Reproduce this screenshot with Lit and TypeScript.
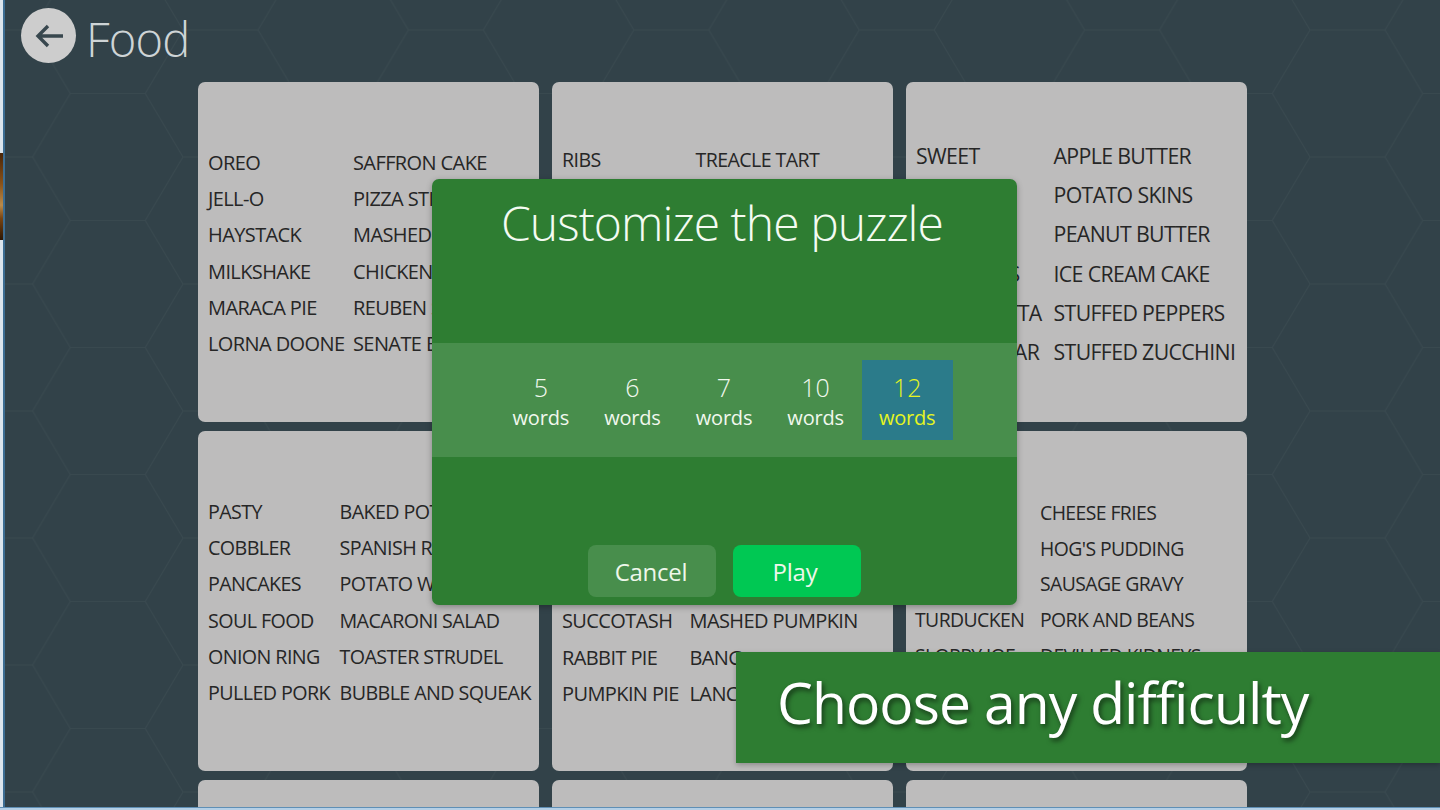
import { LitElement, html, css } from "lit";
import { customElement } from "lit/decorators.js";

interface Card {
  size: number;
  rowGap: number;
  top: number;
  left: number;
  col1: number;
  rows: [string, string][];
}

const CARDS: Card[] = [
  { size: 20, rowGap: 36.2, top: 63, left: 10, col1: 145, rows: [["OREO", "SAFFRON CAKE"], ["JELL-O", "PIZZA STICKS"], ["HAYSTACK", "MASHED PEAS"], ["MILKSHAKE", "CHICKEN PIE"], ["MARACA PIE", "REUBEN SANDWICH"], ["LORNA DOONE", "SENATE BEAN SOUP"]] },
  { size: 19.6, rowGap: 36.2, top: 60, left: 10, col1: 133.5, rows: [["RIBS", "TREACLE TART"]] },
  { size: 21.3, rowGap: 39.4, top: 53.5, left: 10, col1: 137.5, rows: [["SWEET", "APPLE BUTTER"], ["", "POTATO SKINS"], ["", "PEANUT BUTTER"], ["BROWNIES", "ICE CREAM CAKE"], ["BRUSCHETTA", "STUFFED PEPPERS"], ["CANE SUGAR", "STUFFED ZUCCHINI"]] },
  { size: 19.7, rowGap: 36.4, top: 62.5, left: 10, col1: 131.5, rows: [["PASTY", "BAKED POTATO"], ["COBBLER", "SPANISH RICE"], ["PANCAKES", "POTATO WEDGES"], ["SOUL FOOD", "MACARONI SALAD"], ["ONION RING", "TOASTER STRUDEL"], ["PULLED PORK", "BUBBLE AND SQUEAK"]] },
  { size: 20, rowGap: 36.4, top: 63, left: 10, col1: 127.5, rows: [["", ""], ["", ""], ["", ""], ["SUCCOTASH", "MASHED PUMPKIN"], ["RABBIT PIE", "BANG"], ["PUMPKIN PIE", "LANC"]] },
  { size: 19.4, rowGap: 35.7, top: 64, left: 9, col1: 125, rows: [["", "CHEESE FRIES"], ["", "HOG'S PUDDING"], ["", "SAUSAGE GRAVY"], ["TURDUCKEN", "PORK AND BEANS"], ["SLOPPY JOE", "DEVILLED KIDNEYS"]] },
];

@customElement("app-root")
export class AppRoot extends LitElement {
  static styles = css`
    :host {
      display: block;
      width: 1440px;
      height: 810px;
      overflow: hidden;
      font-family: "Open Sans", "Noto Sans", sans-serif;
    }
    .page {
      position: relative;
      width: 1440px;
      height: 810px;
      overflow: hidden;
      background: #324249;
      box-sizing: border-box;
    }
    .hex { position: absolute; inset: 0; width: 100%; height: 100%; }
    .shell { position: relative; height: 810px; }
    .header {
      display: flex;
      align-items: center;
      height: 72px;
      padding-left: 21px;
      gap: 10px;
    }
    .back {
      width: 55px;
      height: 55px;
      border-radius: 50%;
      background: #cdcdcd;
      display: flex;
      align-items: center;
      justify-content: center;
      margin-top: -1px;
    }
    .title {
      font-family: "Open Sans", sans-serif;
      font-weight: 300;
      font-size: 47px;
      line-height: 60px;
      color: #ced4d6;
      margin-top: 5px;
      letter-spacing: -0.8px;
    }
    .grid {
      display: grid;
      grid-template-columns: repeat(3, 341px);
      grid-auto-rows: 340px;
      column-gap: 13px;
      row-gap: 9px;
      padding: 10px 0 0 198px;
    }
    .card {
      background: #bdbcbc;
      border-radius: 7px;
      box-sizing: border-box;
      overflow: hidden;
    }
    .words { display: grid; color: #262626; white-space: nowrap; letter-spacing: -0.03em; }
    .dialog {
      position: absolute;
      left: 432px;
      top: 179px;
      width: 585px;
      height: 426px;
      background: #2e7d32;
      border-radius: 7px;
      box-shadow: 0 2px 6px rgba(0, 0, 0, 0.3);
      display: flex;
      flex-direction: column;
      color: #fff;
    }
    .dialog h1 {
      margin: 0;
      font-weight: 300;
      font-size: 48px;
      line-height: 60px;
      height: 164px;
      padding: 14px 5px 0 0;
      box-sizing: border-box;
      text-align: center;
      letter-spacing: -0.93px;
      color: #f4fbf2;
    }
    .band {
      height: 114px;
      background: #488e4c;
      display: flex;
      justify-content: center;
      align-items: center;
    }
    .opts { display: flex; }
    .opt {
      width: 91.6px;
      height: 80px;
      display: flex;
      flex-direction: column;
      align-items: center;
      justify-content: center;
      color: #f1f8ee;
      text-align: center;
      padding: 2px 1px 0 0;
      box-sizing: border-box;
    }
    .opt .n { font-size: 25px; line-height: 32px; font-weight: 300; }
    .opt .w { font-size: 20px; line-height: 29px; letter-spacing: -0.2px; }
    .opt.sel { background: #2b7b8a; color: #e6f521; }
    .actions {
      margin-top: auto;
      display: flex;
      justify-content: center;
      gap: 17px;
      padding: 0 0 8px 0;
    }
    .btn {
      width: 128px;
      height: 52px;
      border-radius: 8px;
      display: flex;
      align-items: center;
      justify-content: center;
      font-size: 24px;
      font-weight: 400;
      letter-spacing: -0.25px;
      color: #eef7ea;
      box-sizing: border-box;
      padding-right: 2px;
    }
    .cancel { background: #488e4c; }
    .play { background: #00c853; padding-right: 4px; }
    .banner {
      position: absolute;
      left: 736px;
      top: 652px;
      width: 704px;
      height: 111px;
      background: #2e7d32;
      box-sizing: border-box;
      padding: 0 0 12px 41px;
      display: flex;
      align-items: center;
      box-shadow: 0 2px 5px rgba(0, 0, 0, 0.25);
      color: #fff;
      font-size: 57px;
      letter-spacing: -0.93px;
      text-shadow: 2px 3px 5px rgba(0, 0, 0, 0.55);
    }
    .edge-left { position: absolute; left: 0; top: 0; bottom: 0; width: 3px; background: #dde5ec; border-right: 2px solid #3d6d92; }
    .edge-img {
      position: absolute;
      left: 0;
      top: 153px;
      width: 3px;
      height: 87px;
      background: linear-gradient(#4a2508, #8a5218 35%, #b98a4a 60%, #7a4512 75%, #2c1604);
    }
    .edge-bottom { position: absolute; left: 0; right: 0; bottom: 0; height: 3px; background: #b4cfe6; border-top: 1px solid #5f8fb5; box-sizing: border-box; }
  `;

  render() {
    return html`
      <div class="page">
        <svg class="hex" aria-hidden="true">
          <defs>
            <pattern id="h" width="225.4" height="127" patternUnits="userSpaceOnUse" patternTransform="translate(183 30)">
              <path d="M0 0H75L112.7 63.5L75 127H0M112.7 63.5H187.7L225.4 0M187.7 63.5L225.4 127" fill="none" stroke="#39494f" stroke-width="1"/>
            </pattern>
          </defs>
          <rect width="1440" height="810" fill="url(#h)"/>
        </svg>
        <div class="shell">
          <div class="header">
            <div class="back">
              <svg width="28" height="24" viewBox="0 0 28 24" fill="none" stroke="#38474e" stroke-width="3.4">
                <path d="M28 12H3M13 2L3 12L13 22"/>
              </svg>
            </div>
            <div class="title">Food</div>
          </div>
          <div class="grid">
            ${CARDS.map((c) => this.renderCard(c))}
            <div class="card"></div><div class="card"></div><div class="card"></div>
          </div>
        </div>
        <div class="dialog">
          <h1>Customize the puzzle</h1>
          <div class="band">
            <div class="opts">
              ${[5, 6, 7, 10, 12].map(
                (n) => html`<div class="opt ${n === 12 ? "sel" : ""}"><div class="n">${n}</div><div class="w">words</div></div>`
              )}
            </div>
          </div>
          <div class="actions">
            <div class="btn cancel">Cancel</div>
            <div class="btn play">Play</div>
          </div>
        </div>
        <div class="banner">Choose any difficulty</div>
        <div class="edge-left"></div>
        <div class="edge-img"></div>
        <div class="edge-bottom"></div>
      </div>
    `;
  }

  renderCard(c: Card) {
    return html`<div class="card" style="padding:${c.top}px 0 0 ${c.left}px">
      <div class="words" style="font-size:${c.size}px;grid-template-columns:${c.col1}px auto;grid-auto-rows:${c.rowGap}px;line-height:${c.rowGap}px">
        ${c.rows.map((r) => html`<span>${r[0]}</span><span>${r[1]}</span>`)}
      </div>
    </div>`;
  }
}
